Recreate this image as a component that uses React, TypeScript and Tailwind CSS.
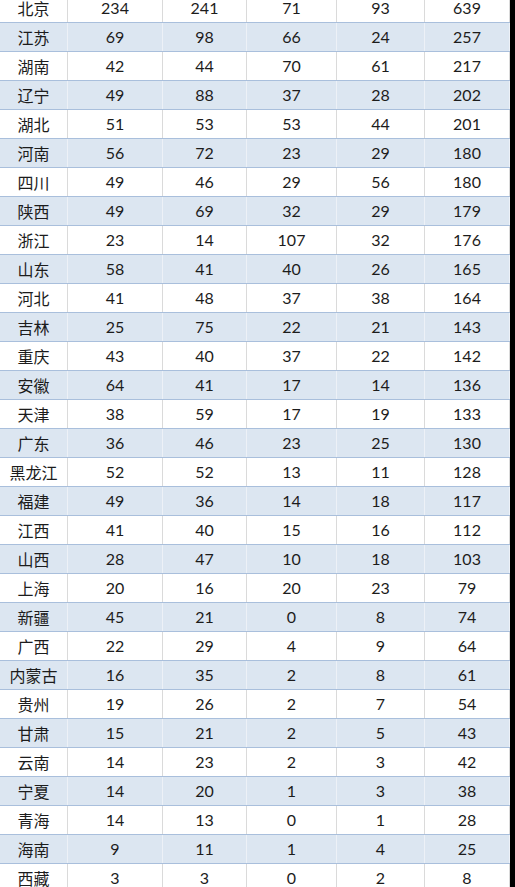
const rows: [string, number, number, number, number, number][] = [
  ["北京", 234, 241, 71, 93, 639],
  ["江苏", 69, 98, 66, 24, 257],
  ["湖南", 42, 44, 70, 61, 217],
  ["辽宁", 49, 88, 37, 28, 202],
  ["湖北", 51, 53, 53, 44, 201],
  ["河南", 56, 72, 23, 29, 180],
  ["四川", 49, 46, 29, 56, 180],
  ["陕西", 49, 69, 32, 29, 179],
  ["浙江", 23, 14, 107, 32, 176],
  ["山东", 58, 41, 40, 26, 165],
  ["河北", 41, 48, 37, 38, 164],
  ["吉林", 25, 75, 22, 21, 143],
  ["重庆", 43, 40, 37, 22, 142],
  ["安徽", 64, 41, 17, 14, 136],
  ["天津", 38, 59, 17, 19, 133],
  ["广东", 36, 46, 23, 25, 130],
  ["黑龙江", 52, 52, 13, 11, 128],
  ["福建", 49, 36, 14, 18, 117],
  ["江西", 41, 40, 15, 16, 112],
  ["山西", 28, 47, 10, 18, 103],
  ["上海", 20, 16, 20, 23, 79],
  ["新疆", 45, 21, 0, 8, 74],
  ["广西", 22, 29, 4, 9, 64],
  ["内蒙古", 16, 35, 2, 8, 61],
  ["贵州", 19, 26, 2, 7, 54],
  ["甘肃", 15, 21, 2, 5, 43],
  ["云南", 14, 23, 2, 3, 42],
  ["宁夏", 14, 20, 1, 3, 38],
  ["青海", 14, 13, 0, 1, 28],
  ["海南", 9, 11, 1, 4, 25],
  ["西藏", 3, 3, 0, 2, 8],
]

export default function App() {
  return (
    <div className="flex h-[887px] w-[515px] overflow-hidden bg-white">
      <div className="w-[510px] -mt-[6px]">
        {rows.map((r, i) => {
          const blue = i % 2 === 1
          const cell = blue
            ? "flex items-center justify-center border-r border-[#edf1f7]"
            : "flex items-center justify-center border-r border-[#dadada]"
          return (
            <div
              key={r[0]}
              className={
                "grid h-[29px] grid-cols-[68px_95px_84px_90px_88px_85px] border-b border-[#a9bfdc] text-[#1c1c1c] " +
                (blue ? "bg-[#dce6f1]" : "bg-white")
              }
            >
              <div className={cell + " font-['Noto_Sans_CJK_SC',sans-serif] text-[16px]"}>{r[0]}</div>
              {r.slice(1).map((v, j) => (
                <div key={j} className={cell + " font-['Lato',sans-serif] text-[16px]"}>
                  {v}
                </div>
              ))}
            </div>
          )
        })}
      </div>
      <div className="w-[5px] bg-black" />
    </div>
  )
}
